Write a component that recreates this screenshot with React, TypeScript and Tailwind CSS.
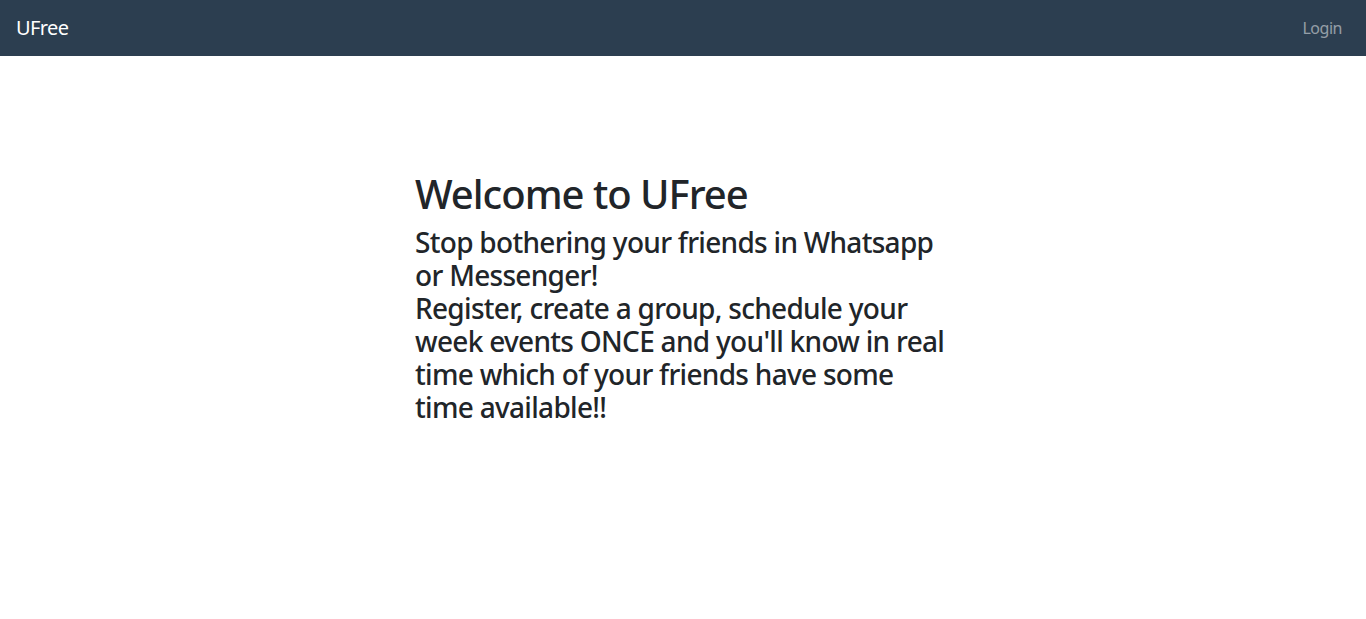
import React from "react";

export default function App() {
  return (
    <div className="min-h-[619px] bg-white text-[#212529]" style={{ fontFamily: '"Noto Sans", "Open Sans", sans-serif' }}>
      <nav className="flex h-[56px] items-center justify-between bg-[#2c3e50] pl-4 pr-6">
        <a className="text-[20px] leading-[30px] tracking-[-0.03em] text-white">UFree</a>
        <a className="text-[16px] leading-6 tracking-[-0.03em] text-white/50">Login</a>
      </nav>
      <div className="mx-auto w-[1140px] px-[15px]">
        <div className="ml-[287px] w-[540px] pt-[114px]">
          <h1 className="mb-2 text-[40px] font-medium leading-[48px] tracking-[-0.025em]">Welcome to UFree</h1>
          <h3 className="text-[28px] font-medium leading-[33px] tracking-[-0.025em]">
            Stop bothering your friends in Whatsapp or Messenger!
            <br />
            Register, create a group, schedule your week events ONCE and you'll know in real time which of your friends have some time available!!
          </h3>
        </div>
      </div>
    </div>
  );
}
